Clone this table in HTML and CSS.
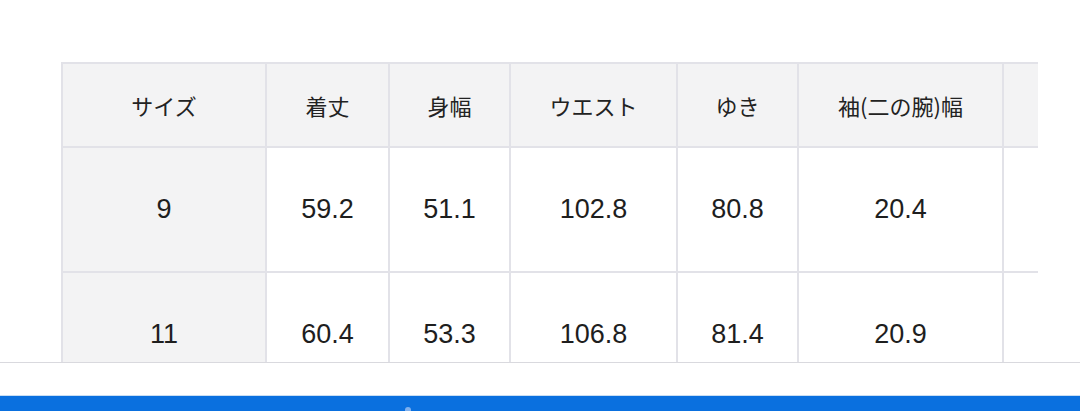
FILE: index.html
```html
<!DOCTYPE html>
<html lang="ja">
<head>
<meta charset="utf-8">
<title>サイズ表</title>
<link rel="stylesheet" href="styles.css">
</head>
<body>
<div class="page">
  <div class="table-wrap">
    <div class="size-grid">
      <div class="cell head first">サイズ</div>
      <div class="cell head">着丈</div>
      <div class="cell head">身幅</div>
      <div class="cell head">ウエスト</div>
      <div class="cell head">ゆき</div>
      <div class="cell head">袖(二の腕)幅</div>
      <div class="cell head"></div>

      <div class="cell num first">9</div>
      <div class="cell num">59.2</div>
      <div class="cell num">51.1</div>
      <div class="cell num">102.8</div>
      <div class="cell num">80.8</div>
      <div class="cell num">20.4</div>
      <div class="cell num"></div>

      <div class="cell num first">11</div>
      <div class="cell num">60.4</div>
      <div class="cell num">53.3</div>
      <div class="cell num">106.8</div>
      <div class="cell num">81.4</div>
      <div class="cell num">20.9</div>
      <div class="cell num"></div>
    </div>
  </div>
</div>
<div class="footer">
  <div class="footer-space"></div>
  <div class="footer-bar"><span class="footer-dot"></span></div>
</div>
</body>
</html>
```

FILE: styles.css
```css
html, body {
  margin: 0;
  padding: 0;
  background: #ffffff;
}
body {
  font-family: "Liberation Sans", Arial, "Noto Sans CJK JP", sans-serif;
  color: #222222;
  overflow: hidden;
  height: 411px;
}
.page {
  padding-top: 62px;
  padding-left: 61px;
}
.table-wrap {
  width: 977px;
  overflow: hidden;
}
.size-grid {
  display: grid;
  grid-template-columns: 204px 123px 121px 167px 121px 205px 200px;
  grid-template-rows: 84px 125px 125px;
  width: max-content;
  border-top: 2px solid #e2e2e8;
  border-left: 2px solid #e2e2e8;
}
.cell {
  display: flex;
  align-items: center;
  justify-content: center;
  border-right: 2px solid #e2e2e8;
  border-bottom: 2px solid #e2e2e8;
  background: #ffffff;
}
.head {
  background: #f3f3f4;
  font-family: "Noto Sans CJK JP", sans-serif;
  font-size: 22px;
  color: #222222;
}
.first {
  background: #f3f3f4;
}
.num {
  font-size: 27px;
  color: #1e1e1e;
}
.footer {
  position: fixed;
  left: 0;
  right: 0;
  bottom: 0;
  display: flex;
  flex-direction: column;
}
.footer-space {
  height: 32px;
  background: #ffffff;
  border-top: 1px solid #d9d9de;
}
.footer-bar {
  height: 15px;
  background: #0a70df;
  border-top: 1px solid #c9def3;
  position: relative;
}
.footer-dot {
  position: absolute;
  left: 405px;
  bottom: 0;
  width: 6px;
  height: 4px;
  border-radius: 3px 3px 0 0;
  background: #7fb0ee;
}
```
